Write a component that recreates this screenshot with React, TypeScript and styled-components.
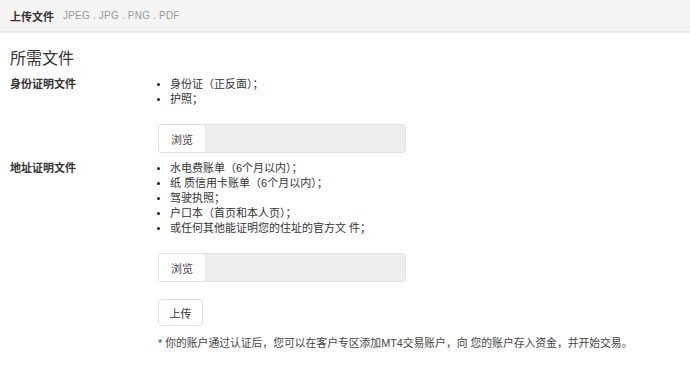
import React from 'react'
import styled, { createGlobalStyle } from 'styled-components'

const GlobalStyle = createGlobalStyle`
    body {
        margin: 0;
        background: #fff;
        font-family: "Liberation Sans", "Noto Sans CJK SC", sans-serif;
        color: #333;
    }
`

const Header = styled.div`
    height: 31px;
    background: #f4f4f4;
    border-bottom: 2px solid #ebebeb;
    display: flex;
    align-items: center;
    padding: 0 10px;
    gap: 9px;
`
const HeaderTitle = styled.span`
    font-size: 11px;
    font-weight: bold;
    color: #333;
`
const HeaderTypes = styled.span`
    font-size: 10px;
    color: #999;
    letter-spacing: 0.2px;
`
const Content = styled.div`
    padding: 15px 10px 0;
`
const SectionTitle = styled.h3`
    margin: 0 0 7px;
    font-size: 16px;
    font-weight: normal;
    line-height: 22px;
    color: #333;
`
const Row = styled.div`
    display: grid;
    grid-template-columns: 148px 1fr;
    margin-bottom: ${props => props.theme.gap}px;
`
const Label = styled.div`
    font-size: 11px;
    font-weight: bold;
    line-height: 15px;
`
const DocList = styled.ul`
    margin: 0 0 17px;
    padding: 0 0 0 12px;
    font-size: 11px;
    line-height: 15px;
    li::marker {
        font-size: 10px;
        color: #222;
    }
`
const FileInput = styled.div`
    display: flex;
    width: 246px;
    height: 27px;
    border: 1px solid #e2e2e2;
    border-radius: 3px;
    overflow: hidden;
`
const BrowseButton = styled.div`
    width: 46px;
    background: #fff;
    border-right: 1px solid #e2e2e2;
    display: flex;
    align-items: center;
    justify-content: center;
    font-size: 11px;
    color: #444;
`
const FileName = styled.div`
    flex: 1;
    background: #eeeeee;
`
const Actions = styled.div`
    padding-left: 148px;
`
const UploadButton = styled.button`
    width: 45px;
    height: 27px;
    border: 1px solid #e2e2e2;
    border-radius: 3px;
    background: #fff;
    font-family: inherit;
    font-size: 11px;
    color: #333;
    padding: 0;
`
const Note = styled.p`
    margin: 10px 0 0;
    font-size: 10.8px;
    line-height: 15px;
    color: #444;
`

const idDocs = ['身份证（正反面）；', '护照；']
const addressDocs = [
    '水电费账单（6个月以内）；',
    '纸 质信用卡账单（6个月以内）；',
    '驾驶执照；',
    '户口本（首页和本人页）；',
    '或任何其他能证明您的住址的官方文 件；',
]

function DocRow(props: { label: string; docs: string[]; gap: number }) {
    return (
        <Row theme={{ gap: props.gap }}>
            <Label>{props.label}</Label>
            <div>
                <DocList>
                    {props.docs.map(d => <li key={d}>{d}</li>)}
                </DocList>
                <FileInput>
                    <BrowseButton>浏览</BrowseButton>
                    <FileName />
                </FileInput>
            </div>
        </Row>
    )
}

export default function App() {
    return (
        <>
            <GlobalStyle />
            <Header>
                <HeaderTitle>上传文件</HeaderTitle>
                <HeaderTypes>JPEG . JPG . PNG . PDF</HeaderTypes>
            </Header>
            <Content>
                <SectionTitle>所需文件</SectionTitle>
                <DocRow label="身份证明文件" docs={idDocs} gap={8} />
                <DocRow label="地址证明文件" docs={addressDocs} gap={17} />
                <Actions>
                    <UploadButton>上传</UploadButton>
                    <Note>* 你的账户通过认证后，您可以在客户专区添加MT4交易账户，向 您的账户存入资金，并开始交易。</Note>
                </Actions>
            </Content>
        </>
    )
}
